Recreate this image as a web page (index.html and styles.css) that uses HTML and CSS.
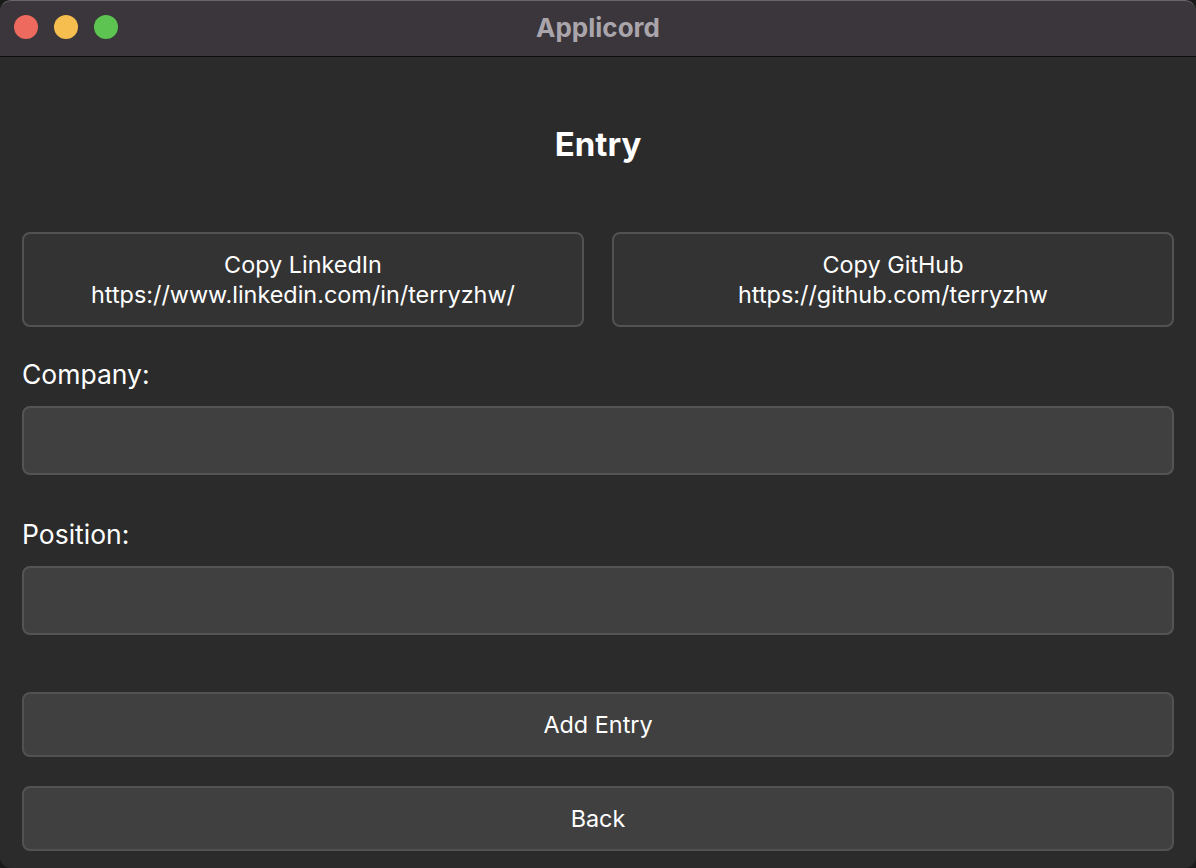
FILE: index.html
```html
<!DOCTYPE html>
<html>
<head>
<meta charset="utf-8">
<link rel="stylesheet" href="styles.css">
</head>
<body>
<div class="window">
  <header class="titlebar">
    <div class="lights">
      <span class="light red"></span>
      <span class="light yellow"></span>
      <span class="light green"></span>
    </div>
    <div class="wtitle">Applicord</div>
  </header>
  <main class="content">
    <h1 class="heading">Entry</h1>
    <div class="links">
      <button class="btn link-btn">Copy LinkedIn<br>https://www.linkedin.com/in/terryzhw/</button>
      <button class="btn link-btn">Copy GitHub<br>https://github.com/terryzhw</button>
    </div>
    <label class="label label-company">Company:</label>
    <div class="input"></div>
    <label class="label label-position">Position:</label>
    <div class="input"></div>
    <button class="btn action add">Add Entry</button>
    <button class="btn action back">Back</button>
  </main>
</div>
</body>
</html>
```

FILE: styles.css
```css
* { box-sizing: border-box; }
html, body { margin: 0; padding: 0; background: #1a1a1a; }
body { font-family: Inter, "Noto Sans", sans-serif; }
.window {
  width: 1196px;
  height: 868px;
  background: #2b2b2b;
  border-radius: 11px;
  overflow: hidden;
  display: flex;
  flex-direction: column;
}
.titlebar {
  height: 57px;
  background: #3a363b;
  border-top: 1px solid #6a676b;
  border-bottom: 1px solid #0d0d0d;
  border-radius: 11px 11px 0 0;
  position: relative;
  display: flex;
  align-items: center;
  justify-content: center;
}
.lights {
  position: absolute;
  left: 14px;
  top: 14px;
  display: flex;
  gap: 16px;
}
.light { width: 24px; height: 24px; border-radius: 50%; display: block; }
.red { background: #ee6a5f; }
.yellow { background: #f5be4f; }
.green { background: #5dc452; }
.wtitle {
  color: #aaa5ab;
  font-weight: 700;
  font-size: 26px;
  margin-top: -3px;
}
.content {
  padding: 0 22px;
  display: flex;
  flex-direction: column;
}
.heading {
  margin: 67px 0 0;
  text-align: center;
  color: #ffffff;
  font-size: 33px;
  font-weight: 700;
  line-height: 40px;
  height: 40px;
}
.links {
  margin-top: 68px;
  display: grid;
  grid-template-columns: 1fr 1fr;
  gap: 28px;
}
.btn {
  font-family: Inter, "Noto Sans", sans-serif;
  color: #ffffff;
  font-size: 23.4px;
  border: 2px solid #525252;
  border-radius: 8px;
  cursor: pointer;
}
.link-btn {
  height: 95px;
  background: #333333;
  line-height: 30px;
  padding: 0;
}
.label {
  color: #ffffff;
  font-size: 26.5px;
  line-height: 30px;
  display: block;
}
.label-company { margin-top: 32px; }
.label-position { margin-top: 44px; }
.input {
  height: 69px;
  margin-top: 17px;
  background: #404040;
  border: 2px solid #545454;
  border-radius: 8px;
}
.action {
  height: 65px;
  background: #404040;
  width: 100%;
}
.add { margin-top: 57px; }
.back { margin-top: 29px; }
```
